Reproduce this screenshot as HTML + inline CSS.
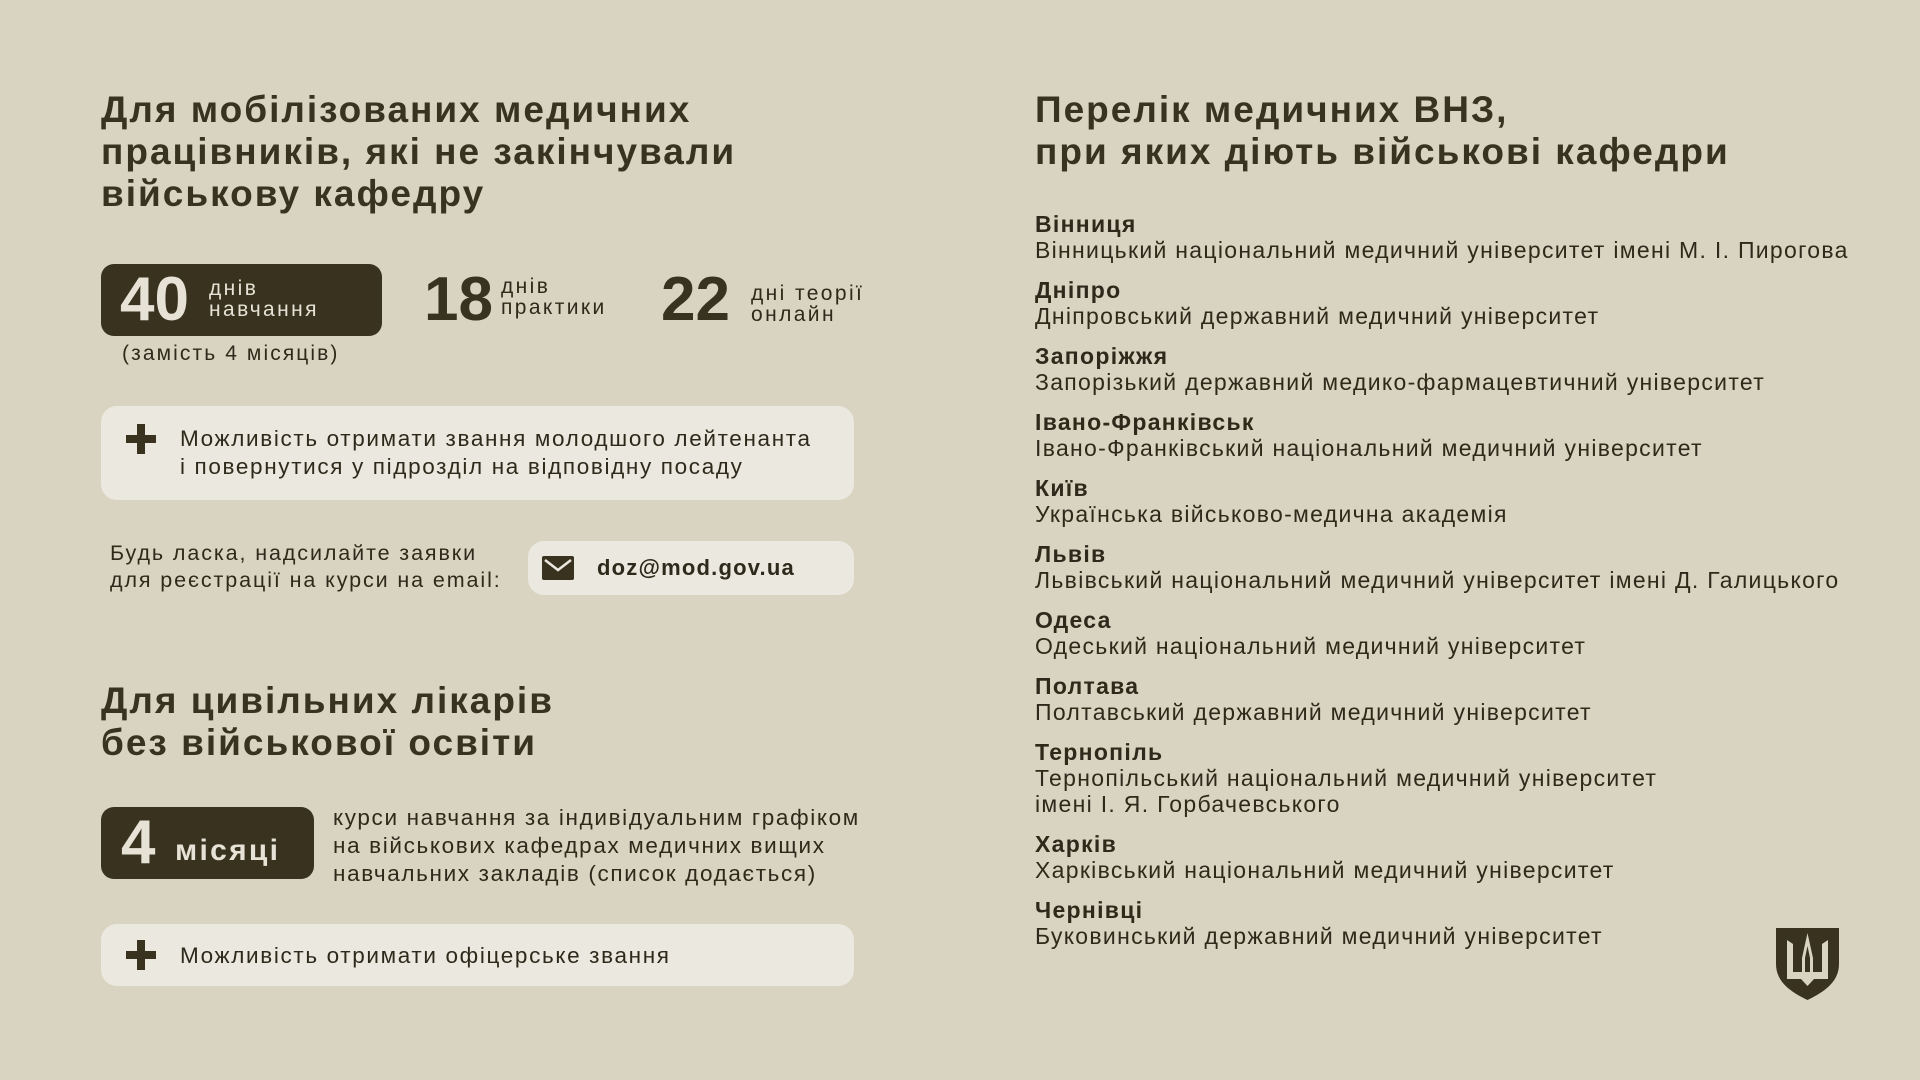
<!DOCTYPE html>
<html><head><meta charset="utf-8"><style>
*{margin:0;padding:0;box-sizing:border-box}
body{width:1920px;height:1080px;background:#d9d4c2;font-family:"Liberation Sans",sans-serif;color:#2e2a1b;position:relative;overflow:hidden}
.a{position:absolute;white-space:nowrap}
h1{position:absolute;font-size:37px;font-weight:bold;line-height:42px;letter-spacing:2px;color:#38331f;white-space:nowrap}
.dark{position:absolute;background:#38321f;border-radius:13px;color:#e6e2d5}
.light{position:absolute;background:#ebe8df;border-radius:16px}
.big{font-size:62px;font-weight:bold;line-height:1}
.sm{font-size:21px;line-height:21px;letter-spacing:2.4px}
.t{font-size:22.5px;line-height:28px;letter-spacing:1.65px}
.plus{position:absolute;width:30px;height:30px}
.plus:before{content:"";position:absolute;left:11px;top:0;width:8px;height:30px;background:#38321f}
.plus:after{content:"";position:absolute;left:0;top:11px;width:30px;height:8px;background:#38321f}
.list{position:absolute;left:1035px;top:211px;font-size:23px;line-height:26px;letter-spacing:1.3px}
.list div{margin-bottom:14px}
.list b{display:block}
</style></head><body>
<h1 style="left:101px;top:89px">Для мобілізованих медичних<br>працівників, які не закінчували<br>військову кафедру</h1>
<h1 style="left:1035px;top:89px">Перелік медичних ВНЗ,<br>при яких діють військові кафедри</h1>

<div class="dark" style="left:101px;top:264px;width:281px;height:72px"></div>
<div class="a big" style="left:120px;top:269px;color:#e6e2d5">40</div>
<div class="a sm" style="left:209px;top:278px;color:#e6e2d5">днів<br>навчання</div>
<div class="a" style="left:122px;top:342px;font-size:21px;letter-spacing:2.1px">(замість 4 місяців)</div>
<div class="a big" style="left:424px;top:269px;color:#38331f">18</div>
<div class="a sm" style="left:501px;top:276px">днів<br>практики</div>
<div class="a big" style="left:661px;top:269px;color:#38331f">22</div>
<div class="a sm" style="left:751px;top:283px">дні теорії<br>онлайн</div>

<div class="light" style="left:101px;top:406px;width:753px;height:94px"></div>
<div class="plus" style="left:126px;top:424px"></div>
<div class="a t" style="left:180px;top:425px">Можливість отримати звання молодшого лейтенанта<br>і повернутися у підрозділ на відповідну посаду</div>

<div class="a" style="left:110px;top:540px;font-size:21.5px;line-height:27px;letter-spacing:1.9px">Будь ласка, надсилайте заявки<br>для реєстрації на курси на email:</div>
<div class="light" style="left:528px;top:541px;width:326px;height:54px"></div>
<svg class="a" style="left:542px;top:556px" width="32" height="24" viewBox="0 0 32 24"><rect width="32" height="24" rx="2" fill="#38321f"/><path d="M3 4 L16 14 L29 4" stroke="#ebe8df" stroke-width="2.5" fill="none"/></svg>
<div class="a" style="left:597px;top:555px;font-size:22px;font-weight:bold;letter-spacing:1.2px">doz@mod.gov.ua</div>

<h1 style="left:101px;top:680px">Для цивільних лікарів<br>без військової освіти</h1>
<div class="dark" style="left:101px;top:807px;width:213px;height:72px"></div>
<div class="a big" style="left:121px;top:812px;color:#e6e2d5">4</div>
<div class="a" style="left:175px;top:834px;font-size:30px;font-weight:bold;letter-spacing:2.3px;color:#e6e2d5">місяці</div>
<div class="a t" style="left:333px;top:804px">курси навчання за індивідуальним графіком<br>на військових кафедрах медичних вищих<br>навчальних закладів (список додається)</div>

<div class="light" style="left:101px;top:924px;width:753px;height:62px"></div>
<div class="plus" style="left:126px;top:940px"></div>
<div class="a t" style="left:180px;top:942px">Можливість отримати офіцерське звання</div>

<div class="list">
<div><b>Вінниця</b>Вінницький національний медичний університет імені М. І. Пирогова</div>
<div><b>Дніпро</b>Дніпровський державний медичний університет</div>
<div><b>Запоріжжя</b>Запорізький державний медико-фармацевтичний університет</div>
<div><b>Івано-Франківськ</b>Івано-Франківський національний медичний університет</div>
<div><b>Київ</b>Українська військово-медична академія</div>
<div><b>Львів</b>Львівський національний медичний університет імені Д. Галицького</div>
<div><b>Одеса</b>Одеський національний медичний університет</div>
<div><b>Полтава</b>Полтавський державний медичний університет</div>
<div><b>Тернопіль</b>Тернопільський національний медичний університет<br>імені І. Я. Горбачевського</div>
<div><b>Харків</b>Харківський національний медичний університет</div>
<div><b>Чернівці</b>Буковинський державний медичний університет</div>
</div>

<svg class="a" style="left:1776px;top:928px" width="63" height="72" viewBox="0 0 63 72">
<path d="M0 0 H63 V36 C63 54 48 64 31.5 72 C15 64 0 54 0 36 Z" fill="#38321f"/>
<path d="M11 12 L17 16 V44 H26 V30 L31.5 5 L37 30 V44 H46 V16 L52 12 V51 H38 L31.5 58 L25 51 H11 Z" fill="#d9d4c2"/>
<path d="M29 30 L31.5 18 L34 30 V44 H29 Z" fill="#38321f"/>
</svg>
</body></html>
